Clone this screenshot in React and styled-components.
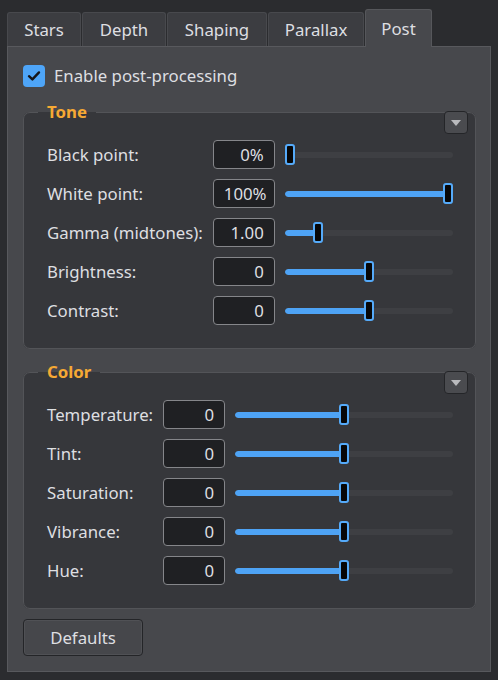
import { useState } from 'react';
import styled, { createGlobalStyle } from 'styled-components';

const GlobalStyle = createGlobalStyle`
  html, body {
    margin: 0;
    padding: 0;
    background-color: #2b2c2f;
  }

  body {
    font-family: "Noto Sans", "Open Sans", sans-serif;
    font-size: 16.8px;
    color: #dedfe1;
  }
`;

const TABS = [
  { name: 'Stars', width: 74 },
  { name: 'Depth', width: 84 },
  { name: 'Shaping', width: 100 },
  { name: 'Parallax', width: 96 },
  { name: 'Post', width: 67 },
];

const TONE = [
  { label: 'Black point:', value: '0%', pos: 0 },
  { label: 'White point:', value: '100%', pos: 1 },
  { label: 'Gamma (midtones):', value: '1.00', pos: 0.18 },
  { label: 'Brightness:', value: '0', pos: 0.5 },
  { label: 'Contrast:', value: '0', pos: 0.5 },
];

const COLOR = [
  { label: 'Temperature:', value: '0', pos: 0.5 },
  { label: 'Tint:', value: '0', pos: 0.5 },
  { label: 'Saturation:', value: '0', pos: 0.5 },
  { label: 'Vibrance:', value: '0', pos: 0.5 },
  { label: 'Hue:', value: '0', pos: 0.5 },
];

function Slider({ pos }) {
  // handle is 10px wide, its centre runs from 5px to (width - 5px)
  const left = `calc(${pos} * (100% - 10px))`;
  return (
    <SliderBase>
      <Track>
        <Fill style={{ width: `calc(${pos} * (100% - 10px) + 5px)` }} />
      </Track>
      <Handle style={{ left }} />
    </SliderBase>
  );
}

function Group({ title, rows }) {
  return (
    <GroupBox>
      <Legend>{title}</Legend>
      <CollapseButton type="button">
        <svg width="10" height="6" viewBox="0 0 10 6">
          <path d="M0 0 H10 L5 6 Z" fill="#b9babd" />
        </svg>
      </CollapseButton>
      <Rows>
        {rows.map(row => (
          <Row key={row.label}>
            <Label>{row.label}</Label>
            <ValueBox>{row.value}</ValueBox>
            <Slider pos={row.pos} />
          </Row>
        ))}
      </Rows>
    </GroupBox>
  );
}

export default function App() {
  const [active, setActive] = useState('Post');
  const [enabled, setEnabled] = useState(true);

  return (
    <>
      <GlobalStyle />
      <Window>
        <TabBar>
          {TABS.map(tab => (
            <Tab
              key={tab.name}
              $width={tab.width}
              $active={tab.name === active}
              onClick={() => setActive(tab.name)}
            >
              {tab.name}
            </Tab>
          ))}
        </TabBar>
        <Pane>
          <CheckRow onClick={() => setEnabled(prev => !prev)}>
            <CheckBox $checked={enabled}>
              {enabled && (
                <svg width="14" height="12" viewBox="0 0 14 12">
                  <path
                    d="M2 6.2 L5.4 9.4 L12 2.4"
                    fill="none"
                    stroke="#15161a"
                    strokeWidth="2.4"
                    strokeLinecap="round"
                    strokeLinejoin="round"
                  />
                </svg>
              )}
            </CheckBox>
            <span>Enable post-processing</span>
          </CheckRow>
          <Group title="Tone" rows={TONE} />
          <Spacer $h={12} />
          <Group title="Color" rows={COLOR} />
          <DefaultsButton type="button">Defaults</DefaultsButton>
        </Pane>
      </Window>
    </>
  );
}

const Window = styled.div`
  padding: 9px 8px 8px 7px;
  width: 484px;
`;

const TabBar = styled.div`
  display: flex;
  align-items: flex-end;
  gap: 1px;
  height: 37px;
  position: relative;
  z-index: 1;
`;

const Tab = styled.div`
  box-sizing: border-box;
  width: ${({ $width }) => $width}px;
  height: ${({ $active }) => ($active ? '38px' : '34px')};
  margin-bottom: ${({ $active }) => ($active ? '-1px' : '0')};
  padding-top: ${({ $active }) => ($active ? '5px' : '3px')};
  border: 1px solid ${({ $active }) => ($active ? '#56575b' : '#48494d')};
  border-bottom: none;
  border-radius: 3px 3px 0 0;
  background-color: ${({ $active }) => ($active ? '#47484c' : '#3c3d41')};
  line-height: 28px;
  text-align: center;
  cursor: default;
`;

const Pane = styled.div`
  box-sizing: border-box;
  height: 626px;
  padding: 17px 14px 0 15px;
  border: 1px solid #58595d;
  background-color: #47484c;
`;

const CheckRow = styled.label`
  display: flex;
  align-items: center;
  gap: 9px;
  height: 23px;
  margin-bottom: 14px;
  cursor: default;
`;

const CheckBox = styled.span`
  display: flex;
  align-items: center;
  justify-content: center;
  width: 22px;
  height: 22px;
  border-radius: 4px;
  background-color: ${({ $checked }) => ($checked ? '#4ea5f8' : '#1f2023')};
`;

const GroupBox = styled.fieldset`
  position: relative;
  margin: 0;
  padding: 0;
  min-width: 0;
  border: 1px solid #535458;
  border-radius: 7px;
  background-color: #36373b;
`;

const Legend = styled.legend`
  margin-left: 14px;
  padding: 0 9px;
  line-height: 22px;
  font-weight: 700;
  color: #f6a934;
`;

const CollapseButton = styled.button`
  position: absolute;
  top: -12px;
  right: 7px;
  display: flex;
  align-items: center;
  justify-content: center;
  width: 24px;
  height: 23px;
  padding: 0;
  border: 1px solid #242528;
  border-radius: 4px;
  background-color: #4a4b4f;
`;

const Rows = styled.div`
  display: grid;
  grid-template-columns: auto 62px 1fr;
  grid-auto-rows: 29px;
  column-gap: 10px;
  row-gap: 10px;
  padding: 17px 22px 23px 23px;
`;

const Row = styled.div`
  display: contents;
`;

const Label = styled.span`
  align-self: center;
  white-space: nowrap;
`;

const ValueBox = styled.div`
  box-sizing: border-box;
  height: 29px;
  padding: 0 10px;
  border: 1px solid #85868a;
  border-radius: 4px;
  background-color: #1f2023;
  line-height: 27px;
  text-align: right;
`;

const SliderBase = styled.div`
  position: relative;
  display: flex;
  align-items: center;
  height: 29px;
`;

const Track = styled.div`
  width: 100%;
  height: 6px;
  border-radius: 3px;
  background-color: #3e3f43;
  overflow: hidden;
`;

const Fill = styled.div`
  height: 100%;
  border-radius: 3px;
  background-color: #4ea3f5;
`;

const Handle = styled.div`
  position: absolute;
  top: 4px;
  box-sizing: border-box;
  width: 10px;
  height: 21px;
  border: 2px solid #55aaf9;
  border-radius: 3px;
  background-color: #070708;
`;

const Spacer = styled.div`
  height: ${({ $h }) => $h}px;
`;

const DefaultsButton = styled.button`
  display: block;
  width: 120px;
  height: 37px;
  margin-top: 10px;
  padding: 0;
  border: 1px solid #242528;
  border-radius: 4px;
  background-color: #46474b;
  box-shadow: inset 0 0 0 1px #505155;
  font-family: inherit;
  font-size: 16.8px;
  color: #dedfe1;
`;
